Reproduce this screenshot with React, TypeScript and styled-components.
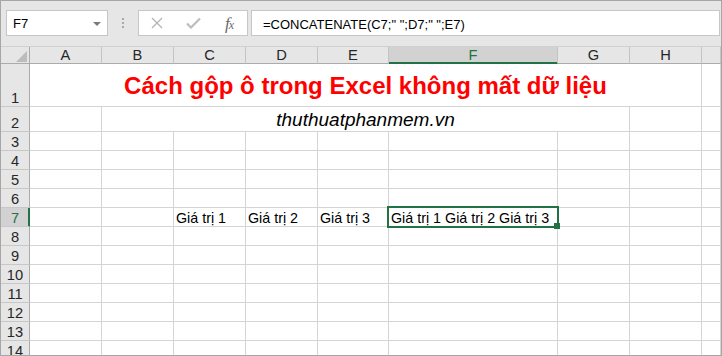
import React from "react";
import styled, { createGlobalStyle } from "styled-components";

const GlobalStyle = createGlobalStyle`
  html, body {
    margin: 0;
    padding: 0;
    background: #fff;
  }
  body {
    font-family: "Liberation Sans", Arial, sans-serif;
  }
  * {
    box-sizing: border-box;
  }
`;

const GREEN = "#217346";

const Frame = styled.div`
  width: 722px;
  height: 356px;
  border: 1px solid #a6a6a6;
  overflow: hidden;
  display: flex;
  flex-direction: column;
  background: #fff;
`;

const Toolbar = styled.div`
  flex: none;
  height: 46px;
  display: flex;
  align-items: flex-start;
  padding: 9px 1px 0 5px;
  background: #e6e6e6;
  border-bottom: 1px solid #d0d0d0;
`;

const Box = styled.div`
  height: 26px;
  background: #fff;
  border: 1px solid #c6c6c6;
  display: flex;
  align-items: center;
`;

const NameBox = styled(Box)`
  width: 102px;
  justify-content: space-between;
  padding: 1px 6px 0 6px;
  font-size: 13px;
  color: #000;
`;

const Grip = styled.div`
  width: 30px;
  height: 26px;
  display: flex;
  flex-direction: column;
  align-items: center;
  justify-content: center;
  gap: 2px;

  span {
    width: 2px;
    height: 2px;
    background: #a8a8a8;
  }
`;

const Buttons = styled(Box)`
  width: 110px;
`;

const ToolButton = styled.div`
  width: 36px;
  height: 24px;
  display: flex;
  align-items: center;
  justify-content: center;
`;

const Fx = styled.span`
  font-family: "Liberation Serif", "Times New Roman", serif;
  font-style: italic;
  color: #6a6a6a;
  font-size: 17px;
  line-height: 1;
  letter-spacing: -1px;

  small {
    font-size: 12px;
  }
`;

const FormulaBox = styled(Box)`
  flex: 1;
  margin-left: 3px;
  padding: 2px 11px 0;
  font-size: 13px;
  color: #000;
  white-space: nowrap;
`;

const Sheet = styled.div`
  flex: none;
  display: grid;
  grid-template-columns: 29px 72px 72px 72px 72px 71px 169px 72px 72px 1fr;
  grid-template-rows: 17px 43px 25px repeat(12, 19px);
  font-size: 14.67px;
  line-height: 15px;
`;

const Corner = styled.div`
  background: #e6e6e6;
  border-right: 1px solid #ababab;
  border-bottom: 1px solid #ababab;
  display: flex;
  align-items: flex-end;
  justify-content: flex-end;
  padding: 0 2px 1px 0;
`;

const ColHead = styled.div<{ $selected?: boolean }>`
  background: ${(p) => (p.$selected ? "#d2d2d2" : "#e6e6e6")};
  color: ${(p) => (p.$selected ? GREEN : "#262626")};
  border-right: 1px solid #c4c4c4;
  border-bottom: 1px solid ${(p) => (p.$selected ? GREEN : "#ababab")};
  box-shadow: ${(p) => (p.$selected ? `inset 0 -1px 0 ${GREEN}` : "none")};
  display: flex;
  align-items: flex-end;
  justify-content: center;
  white-space: nowrap;
`;

const RowHead = styled.div<{ $selected?: boolean }>`
  background: ${(p) => (p.$selected ? "#d2d2d2" : "#e6e6e6")};
  color: ${(p) => (p.$selected ? GREEN : "#262626")};
  border-right: 1px solid ${(p) => (p.$selected ? GREEN : "#ababab")};
  border-bottom: 1px solid #c8c8c8;
  box-shadow: ${(p) => (p.$selected ? `inset -1px 0 0 ${GREEN}` : "none")};
  display: flex;
  align-items: flex-end;
  justify-content: center;
`;

const Cell = styled.div<{ $span?: number; $center?: boolean }>`
  grid-column: span ${(p) => p.$span ?? 1};
  position: relative;
  min-width: 0;
  border-right: 1px solid #d4d4d4;
  border-bottom: 1px solid #d4d4d4;
  display: flex;
  align-items: flex-end;
  justify-content: ${(p) => (p.$center ? "center" : "flex-start")};
  padding: 0 2px;
  font-size: 14.3px;
  color: #000;
  white-space: nowrap;
`;

const ActiveCell = styled(Cell)`
  &::before {
    content: "";
    position: absolute;
    left: -2px;
    top: -2px;
    right: -2px;
    bottom: -2px;
    border: 2px solid ${GREEN};
    z-index: 1;
  }
`;

const FillHandle = styled.span`
  position: absolute;
  right: -3px;
  bottom: -3px;
  width: 6px;
  height: 6px;
  background: ${GREEN};
  z-index: 2;
`;

const Title = styled.span`
  font-weight: bold;
  font-size: 24px;
  line-height: 24px;
  color: #ff0000;
  margin-bottom: 8px;
`;

const Subtitle = styled.span`
  font-style: italic;
  font-size: 19px;
  line-height: 19px;
  margin-bottom: 2px;
`;

const COLUMNS = ["A", "B", "C", "D", "E", "F", "G", "H", ""];
const ACTIVE_COL = "F";
const ACTIVE_ROW = 7;

const plainRow = (n: number) => {
  const cells = [];
  for (let i = 0; i < COLUMNS.length; i++) cells.push(<Cell key={i} />);
  return [<RowHead key="h" $selected={n === ACTIVE_ROW}>{n}</RowHead>, ...cells];
};

const App = () => {
  const rows: React.ReactNode[] = [];

  rows.push(
    <RowHead key="r1">1</RowHead>,
    <Cell key="r1-title" $span={8} $center>
      <Title>Cách gộp ô trong Excel không mất dữ liệu</Title>
    </Cell>,
    <Cell key="r1-i" />
  );

  rows.push(
    <RowHead key="r2">2</RowHead>,
    <Cell key="r2-a" />,
    <Cell key="r2-sub" $span={6} $center>
      <Subtitle>thuthuatphanmem.vn</Subtitle>
    </Cell>,
    <Cell key="r2-h" />,
    <Cell key="r2-i" />
  );

  for (let n = 3; n <= 14; n++) {
    if (n === 7) {
      rows.push(
        <RowHead key="r7" $selected>
          7
        </RowHead>,
        <Cell key="r7-a" />,
        <Cell key="r7-b" />,
        <Cell key="r7-c">Giá trị 1</Cell>,
        <Cell key="r7-d">Giá trị 2</Cell>,
        <Cell key="r7-e">Giá trị 3</Cell>,
        <ActiveCell key="r7-f">
          Giá trị 1 Giá trị 2 Giá trị 3
          <FillHandle />
        </ActiveCell>,
        <Cell key="r7-g" />,
        <Cell key="r7-h" />,
        <Cell key="r7-i" />
      );
    } else {
      rows.push(<React.Fragment key={"r" + n}>{plainRow(n)}</React.Fragment>);
    }
  }

  return (
    <>
      <GlobalStyle />
      <Frame>
        <Toolbar>
          <NameBox>
            <span>F7</span>
            <svg width="8" height="4" viewBox="0 0 8 4">
              <path d="M0 0h8L4 4z" fill="#7a7a7a" />
            </svg>
          </NameBox>
          <Grip>
            <span />
            <span />
            <span />
          </Grip>
          <Buttons>
            <ToolButton>
              <svg width="12" height="12" viewBox="0 0 12 12">
                <path d="M1 1l10 10M11 1L1 11" stroke="#b4b4b4" strokeWidth="1.3" fill="none" />
              </svg>
            </ToolButton>
            <ToolButton>
              <svg width="15" height="12" viewBox="0 0 15 12">
                <path d="M1 6.5l4 4L14 1.5" stroke="#bdbdbd" strokeWidth="2.2" fill="none" />
              </svg>
            </ToolButton>
            <ToolButton>
              <Fx>
                f<small>x</small>
              </Fx>
            </ToolButton>
          </Buttons>
          <FormulaBox>=CONCATENATE(C7;" ";D7;" ";E7)</FormulaBox>
        </Toolbar>

        <Sheet>
          <Corner>
            <svg width="11" height="11" viewBox="0 0 11 11">
              <path d="M11 0v11H0z" fill="#bcbcbc" />
            </svg>
          </Corner>
          {COLUMNS.map((c, i) => (
            <ColHead key={i} $selected={c === ACTIVE_COL}>
              {c}
            </ColHead>
          ))}
          {rows}
        </Sheet>
      </Frame>
    </>
  );
};

export default App;
